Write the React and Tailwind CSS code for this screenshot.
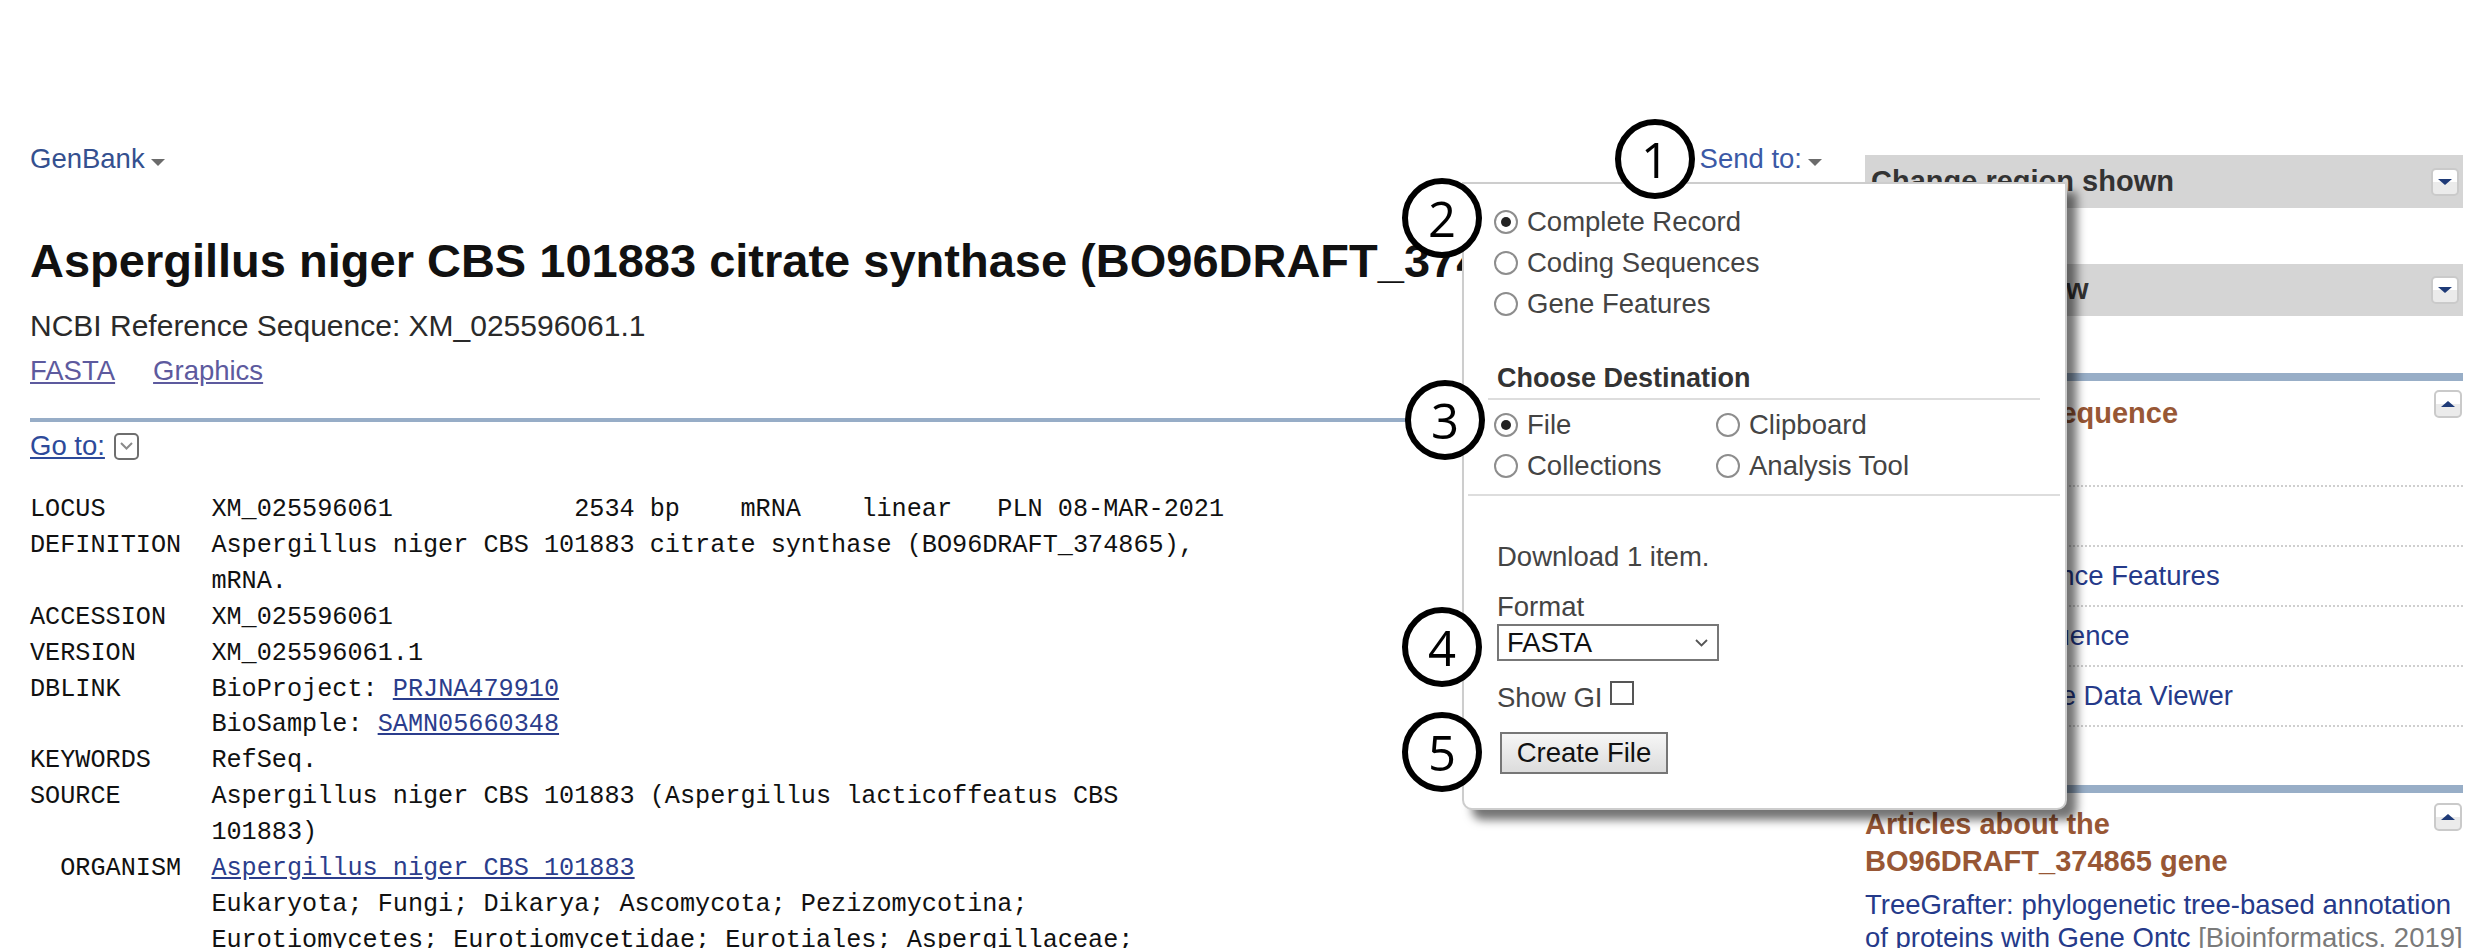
import React from "react";

const Caret = () => (
  <span className="ml-[6px] mt-[7px] inline-block h-0 w-0 border-x-[7px] border-t-[7px] border-x-transparent border-t-[#6b6b6b]" />
);

const Toggle = ({ up }) => (
  <span className="flex h-[28px] w-[28px] shrink-0 items-center justify-center rounded-[5px] border-2 border-[#cacaca] bg-[linear-gradient(#ffffff_50%,#ebebeb_50%)]">
    {up ? (
      <span className="h-0 w-0 border-x-[7px] border-b-[6px] border-x-transparent border-b-[#1f3b78]" />
    ) : (
      <span className="h-0 w-0 border-x-[7px] border-t-[6px] border-x-transparent border-t-[#1f3b78]" />
    )}
  </span>
);

const Radio = ({ checked }) => (
  <span className="flex h-[24px] w-[24px] shrink-0 items-center justify-center rounded-full border-2 border-[#8d8d8d] bg-white">
    {checked && <span className="h-[10px] w-[10px] rounded-full bg-[#222]" />}
  </span>
);

const Option = ({ label, checked }) => (
  <label className="flex h-[41px] items-center gap-[9px]">
    <Radio checked={checked} />
    <span>{label}</span>
  </label>
);

// numbered callouts drawn over the screenshot
const Marker = ({ n, className }) => (
  <div
    className={`absolute flex h-[80px] w-[80px] items-center justify-center rounded-full border-[6px] border-black bg-white font-['Open_Sans',sans-serif] text-[49px] leading-none text-black ${className}`}
  >
    {n}
  </div>
);

const RecLink = ({ children }) => (
  <a href="#" className="text-[#2b3d8c] underline">
    {children}
  </a>
);

const record = [
  ["LOCUS", "XM_025596061            2534 bp    mRNA    linear   PLN 08-MAR-2021"],
  ["DEFINITION", "Aspergillus niger CBS 101883 citrate synthase (BO96DRAFT_374865),"],
  ["", "mRNA."],
  ["ACCESSION", "XM_025596061"],
  ["VERSION", "XM_025596061.1"],
  ["DBLINK", <>BioProject: <RecLink>PRJNA479910</RecLink></>],
  ["", <>BioSample: <RecLink>SAMN05660348</RecLink></>],
  ["KEYWORDS", "RefSeq."],
  ["SOURCE", "Aspergillus niger CBS 101883 (Aspergillus lacticoffeatus CBS"],
  ["", "101883)"],
  ["  ORGANISM", <RecLink>Aspergillus niger CBS 101883</RecLink>],
  ["", "Eukaryota; Fungi; Dikarya; Ascomycota; Pezizomycotina;"],
  ["", "Eurotiomycetes; Eurotiomycetidae; Eurotiales; Aspergillaceae;"],
  ["", "Aspergillus."],
];

const tools = [
  "Run BLAST",
  "Pick Primers",
  "Highlight Sequence Features",
  "Find in this Sequence",
  "Show in Genome Data Viewer",
];

export default function App() {
  return (
    <div className="relative h-[948px] w-[2481px] overflow-hidden bg-white font-['Liberation_Sans',Arial,sans-serif] text-[#222]">
      <div className="flex">
        {/* main record column */}
        <main className="ml-[30px] w-[1795px] pt-[143px]">
          <div className="flex h-[32px] items-center justify-between text-[27.5px] leading-[32px]">
            <a href="#" className="flex items-center text-[#34508f]">
              GenBank
              <Caret />
            </a>
            <a href="#" className="mr-[3px] flex items-center text-[#3b59a6]">
              Send to:
              <Caret />
            </a>
          </div>

          <h1 className="mt-[59px] whitespace-nowrap text-[47px] font-bold leading-[54px] text-[#111]">
            Aspergillus niger CBS 101883 citrate synthase (BO96DRAFT_374865), mRNA
          </h1>
          <p className="mt-[20px] text-[30px] leading-[36px] text-[#2a2a2a]">
            NCBI Reference Sequence: XM_025596061.1
          </p>
          <div className="mt-[11px] flex gap-[38px] text-[27.5px] leading-[32px]">
            <a href="#" className="text-[#5d5a9e] underline">
              FASTA
            </a>
            <a href="#" className="text-[#5d5a9e] underline">
              Graphics
            </a>
          </div>

          <div className="mt-[31px] h-[4px] bg-[#97adc7]" />

          <div className="mt-[8px] flex h-[32px] items-center gap-[9px] text-[27.5px] leading-[32px]">
            <a href="#" className="text-[#2d4a9a] underline">
              Go to:
            </a>
            <span className="flex h-[27px] w-[25px] items-center justify-center rounded-[5px] border-2 border-[#6e6e6e]">
              <svg width="13" height="8" viewBox="0 0 13 8" fill="none">
                <path d="M1 1l5.5 5.5L12 1" stroke="#8a8a8a" strokeWidth="2" />
              </svg>
            </span>
          </div>

          <div className="mt-[30px] font-['Liberation_Mono',monospace] text-[25.2px] leading-[35.9px] text-[#111]">
            {record.map(([label, content], i) => (
              <div key={i} className="whitespace-pre">
                {label.padEnd(12, " ")}
                {content}
              </div>
            ))}
          </div>
        </main>

        {/* right sidebar */}
        <aside className="ml-[40px] w-[598px] pt-[155px]">
          <div className="flex h-[53px] items-center justify-between bg-[#d5d5d5] pl-[6px] pr-[4px]">
            <span className="text-[29px] font-bold text-[#333]">Change region shown</span>
            <Toggle />
          </div>
          <div className="mt-[56px] flex h-[52px] items-center justify-between bg-[#d5d5d5] pl-[6px] pr-[4px]">
            <span className="text-[29px] font-bold text-[#333]">Customize view</span>
            <Toggle />
          </div>

          <div className="mt-[57px] h-[8px] bg-[#98aec7]" />
          <div className="flex h-[46px] items-start justify-between pr-[1px]">
            <h3 className="mt-[14px] pl-[2px] text-[29px] font-bold leading-[36px] text-[#985735]">
              Analyze this sequence
            </h3>
            <span className="mt-[9px]">
              <Toggle up />
            </span>
          </div>
          <ul className="text-[27.5px]">
            {tools.map((t) => (
              <li
                key={t}
                className="flex h-[60px] items-center border-b-2 border-dotted border-[#cfcfcf]"
              >
                <a href="#" className="text-[#253a8a]">
                  {t}
                </a>
              </li>
            ))}
          </ul>

          <div className="mt-[58px] h-[8px] bg-[#98aec7]" />
          <div className="flex items-start justify-between pr-[1px]">
            <h3 className="mt-[13px] text-[29px] font-bold leading-[37px] text-[#985735]">
              Articles about the
              <br />
              BO96DRAFT_374865 gene
            </h3>
            <span className="mt-[10px]">
              <Toggle up />
            </span>
          </div>
          <p className="mt-[8px] text-[27.5px] leading-[33px]">
            <a href="#" className="text-[#253a8a]">
              TreeGrafter: phylogenetic tree-based annotation of proteins with Gene Ontc
            </a>{" "}
            <span className="text-[#7a7a7a]">[Bioinformatics. 2019]</span>
          </p>
        </aside>
      </div>

      {/* Send to popup */}
      <div className="absolute left-[1462px] top-[182px] h-[628px] w-[605px] rounded-b-[10px] border-2 border-[#cdcdcd] bg-white text-[27.5px] leading-[32px] text-[#444] shadow-[10px_10px_10px_rgba(0,0,0,0.55)]">
        <div className="pl-[30px] pt-[17px]">
          <Option label="Complete Record" checked />
          <Option label="Coding Sequences" />
          <Option label="Gene Features" />
        </div>

        <h4 className="ml-[33px] mt-[38px] text-[27px] font-bold leading-[32px] text-[#333]">
          Choose Destination
        </h4>
        <div className="ml-[24px] mt-[4px] h-[2px] w-[552px] bg-[#dddddd]" />
        <div className="mt-[4px] grid w-[460px] grid-cols-[222px_1fr] pl-[30px]">
          <Option label="File" checked />
          <Option label="Clipboard" />
          <Option label="Collections" />
          <Option label="Analysis Tool" />
        </div>
        <div className="ml-[4px] mt-[8px] h-[2px] w-[592px] bg-[#dddddd]" />

        <div className="pl-[33px]">
          <p className="mt-[45px]">Download 1 item.</p>
          <p className="mt-[18px]">Format</p>
          <div className="mt-[1px] flex h-[37px] w-[222px] items-center justify-between border-2 border-[#777] pl-[8px] pr-[9px] text-[#111]">
            <span>FASTA</span>
            <svg width="13" height="8" viewBox="0 0 13 8" fill="none">
              <path d="M1 1l5.5 5.5L12 1" stroke="#555" strokeWidth="1.8" />
            </svg>
          </div>
          <div className="mt-[21px] flex items-start gap-[8px]">
            <span>Show GI</span>
            <span className="mt-[-1px] h-[24px] w-[24px] border-2 border-[#555] bg-white" />
          </div>
          <button className="ml-[3px] mt-[18px] flex h-[42px] w-[168px] items-center justify-center border-2 border-[#767676] bg-[linear-gradient(#f6f6f6,#dcdcdc)] text-[27.5px] text-[#111]">
            Create File
          </button>
        </div>
      </div>

      <Marker n="1" className="left-[1615px] top-[119px]" />
      <Marker n="2" className="left-[1402px] top-[178px]" />
      <Marker n="3" className="left-[1405px] top-[380px]" />
      <Marker n="4" className="left-[1402px] top-[607px]" />
      <Marker n="5" className="left-[1402px] top-[712px]" />
    </div>
  );
}
